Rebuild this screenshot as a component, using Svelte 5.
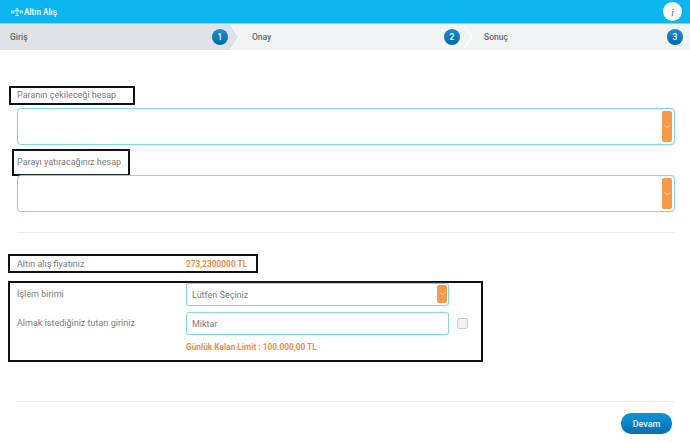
<script>
  const steps = [
    { label: 'Giriş', n: 1, active: true },
    { label: 'Onay', n: 2 },
    { label: 'Sonuç', n: 3 }
  ];
</script>

<div class="page">
  <header class="top">
    <div class="title">
      <svg class="logo" width="14" height="10" viewBox="0 0 14 10" fill="none" stroke="#fff" stroke-width="0.7">
        <path d="M5.5 3.5 L7 1 L8.5 3.5 Z M1 4 H6 M8 4 H13 M2 4 L1 6 H4 L3 4 M11 4 L10 6 H13 L12 4 M7 3.5 V8.5 M5 8.5 H9" />
      </svg>
      <span>Altın Alış</span>
    </div>
    <div class="info">i</div>
  </header>

  <nav class="steps">
    {#each steps as s}
      <div class="step" class:active={s.active}>
        <span class="step-label">{s.label}</span>
        <span class="num">{s.n}</span>
        {#if s.n < 3}
          <svg class="chev" width="10" height="26" viewBox="0 0 10 26">
            <path d="M0 0 L9 13 L0 26 Z" fill={s.active ? '#dfe3e8' : '#f1f3f6'} />
            <path d="M0 0 L9 13 L0 26" fill="none" stroke="#fff" stroke-width="1" />
          </svg>
        {/if}
      </div>
    {/each}
  </nav>

  <main class="content">
    <div class="field-label first">
      <span class="note n1"></span>
      Paranın çekileceği hesap
    </div>
    <div class="big-select"><span class="arrow"><svg width="7" height="4" viewBox="0 0 7 4" fill="none" stroke="#ffe0c0" stroke-width="1"><path d="M1 .5 L3.5 3 L6 .5" /></svg></span></div>

    <div class="field-label second">
      <span class="note n2"></span>
      Parayı yatıracağınız hesap
    </div>
    <div class="big-select"><span class="arrow"><svg width="7" height="4" viewBox="0 0 7 4" fill="none" stroke="#ffe0c0" stroke-width="1"><path d="M1 .5 L3.5 3 L6 .5" /></svg></span></div>

    <hr class="rule r1" />

    <div class="row price">
      <span class="note n3"></span>
      <span class="row-label">Altın alış fiyatınız</span>
      <strong class="orange">273,2300000 TL</strong>
    </div>

    <div class="form">
      <span class="note n4"></span>
      <div class="row">
        <span class="row-label up">İşlem birimi</span>
        <div class="input select">Lütfen Seçiniz<span class="arrow small"><svg width="7" height="4" viewBox="0 0 7 4" fill="none" stroke="#ffe0c0" stroke-width="1"><path d="M1 .5 L3.5 3 L6 .5" /></svg></span></div>
      </div>
      <div class="row second-row">
        <span class="row-label up">Almak istediğiniz tutarı giriniz</span>
        <div class="input">Miktar</div>
        <span class="check"></span>
      </div>
      <div class="row limit-row">
        <span class="row-label"></span>
        <strong class="orange limit">Günlük Kalan Limit : 100.000,00 TL</strong>
      </div>
    </div>

    <hr class="rule r2" />

    <div class="actions">
      <button class="next">Devam</button>
    </div>
  </main>
</div>

<style>
  :global(body) {
    margin: 0;
    background: #fff;
  }
  .page {
    width: 690px;
    height: 442px;
    overflow: hidden;
    font-family: Roboto, "Liberation Sans", sans-serif;
    color: #777b7f;
    font-size: 9px;
  }
  .top {
    height: 23px;
    background: #0bb6f0;
    display: flex;
    align-items: center;
    justify-content: space-between;
    padding: 0 8px 0 10px;
    color: #fff;
  }
  .title {
    display: flex;
    align-items: center;
    gap: 0;
    font-size: 8.2px;
    font-weight: 500;
  }
  .logo { display: block; }
  .info {
    width: 19px;
    height: 19px;
    border-radius: 50%;
    background: #fff;
    color: #666;
    font: italic 400 11px "Liberation Serif", serif;
    display: flex;
    align-items: center;
    justify-content: center;
  }
  .steps {
    height: 26px;
    display: grid;
    grid-template-columns: 230px 233px 227px;
    background: #f1f3f6;
    border-top: 1px solid #7fd6f2;
  }
  .step {
    position: relative;
    display: flex;
    align-items: center;
    justify-content: space-between;
    padding: 0 2px 0 10px;
    font-size: 8.5px;
    font-weight: 500;
    color: #63686c;
  }
  .step:nth-child(2) { padding-left: 22px; padding-right: 3px; }
  .step:nth-child(3) { padding-left: 21px; padding-right: 7px; }
  .step.active { background: #dfe3e8; }
  .chev {
    position: absolute;
    left: 100%;
    top: 0;
    z-index: 1;
  }
  .num {
    width: 16px;
    height: 16px;
    border-radius: 50%;
    background: linear-gradient(#1b8fd0, #0468a8);
    color: #fff;
    font-size: 8.5px;
    display: flex;
    align-items: center;
    justify-content: center;
  }
  .content {
    position: relative;
    padding: 0 15px 0 17px;
  }
  .note {
    position: absolute;
    border: 2px solid #111;
    box-sizing: border-box;
    pointer-events: none;
  }
  .field-label {
    position: relative;
    height: 13px;
    line-height: 13px;
  }
  .field-label.first { margin-top: 39px; margin-bottom: 6px; }
  .field-label.second { margin-top: 11px; margin-bottom: 6px; }
  .n1 { left: -8px; top: -3px; width: 126px; height: 19px; }
  .n2 { left: -5px; top: -7px; width: 118px; height: 27px; }
  .big-select {
    position: relative;
    height: 37px;
    box-sizing: border-box;
    border: 1px solid #84d6dc;
    border-radius: 4px;
    box-shadow: 0 0 1px #84d6dc;
  }
  .arrow {
    position: absolute;
    right: 2px;
    top: 2px;
    bottom: 2px;
    width: 10px;
    background: #f5994a;
    border-radius: 2px;
    display: flex;
    align-items: center;
    justify-content: center;
  }
  .arrow.small { top: 1px; bottom: 2px; right: 1px; }
  .rule {
    border: 0;
    border-top: 1px solid #e8eaec;
    margin: 0;
  }
  .r1 { margin-top: 20px; }
  .row {
    position: relative;
    display: flex;
    align-items: center;
  }
  .row-label { width: 169px; flex: none; }
  .up { position: relative; top: -1px; }
  .price { height: 14px; margin-top: 24px; }
  .n3 { left: -9px; top: -3px; width: 250px; height: 19px; }
  .orange { color: #e9904c; font-weight: 700; font-size: 8.3px; }
  .form {
    position: relative;
    margin-top: 12px;
  }
  .n4 { left: -9px; top: -2px; width: 475px; height: 81px; }
  .input {
    position: relative;
    width: 263px;
    height: 23px;
    box-sizing: border-box;
    border: 1px solid #84d6dc;
    border-radius: 3px;
    box-shadow: 0 0 1px #84d6dc;
    display: flex;
    align-items: center;
    padding-left: 5px;
  }
  .second-row { margin-top: 6px; }
  .check {
    width: 11px;
    height: 11px;
    margin-left: 8px;
    box-sizing: border-box;
    border: 1px solid #c8cdd0;
    border-radius: 2px;
    background: #eef0f2;
  }
  .limit-row { margin-top: 5px; height: 13px; }
  .r2 { margin-top: 48px; }
  .actions {
    display: flex;
    justify-content: flex-end;
    margin-top: 11px;
    padding-right: 3px;
  }
  .next {
    width: 51px;
    height: 21px;
    padding: 0;
    border: 0;
    border-radius: 10px;
    background: linear-gradient(#0a96dc, #0a6cb0);
    color: #e6f4fb;
    font: 500 9px Roboto, sans-serif;
  }
</style>
